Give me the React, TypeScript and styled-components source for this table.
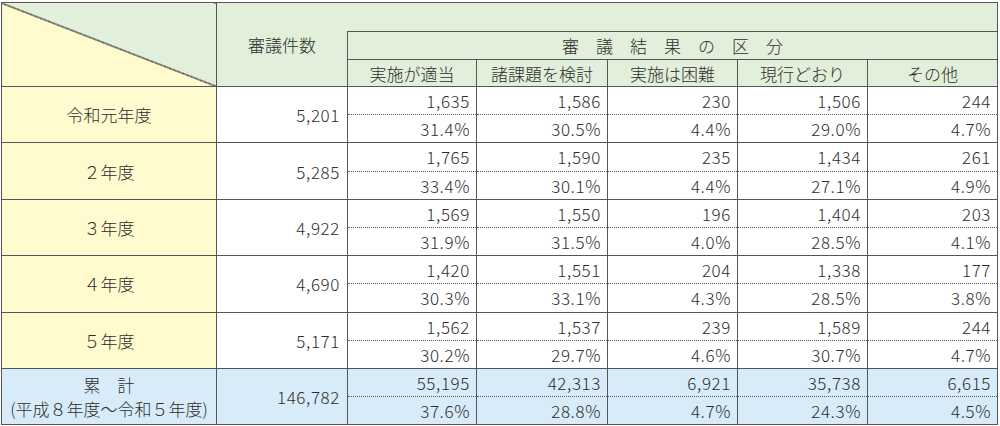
import React from "react";
import styled, { createGlobalStyle } from "styled-components";

const Global = createGlobalStyle`
  html, body { margin: 0; padding: 0; background: #ffffff; }
  body { font-family: "Noto Sans CJK JP", "Noto Sans", sans-serif; color: #333; }
`;

const GREEN = "#e2efda";
const YELLOW = "#fffbcf";
const BLUE = "#d7ecf8";
const LINE = "#555";
const DOT = "#5a5a5a";

const Table = styled.table`
  border-collapse: collapse;
  table-layout: fixed;
  width: 996px;
  margin: 2px 0 0 1px;
  font-size: 17px;
  font-weight: 300;
  line-height: 21px;
  color: #2e2e2e;
  border: 1px solid ${LINE};
`;

const Corner = styled.th`
  border: 1px solid ${LINE};
  padding: 0;
  background: linear-gradient(
    to top right,
    ${YELLOW} calc(50% - 0.7px),
    #3a3a3a calc(50% - 0.5px),
    #3a3a3a calc(50% + 0.5px),
    ${GREEN} calc(50% + 0.7px)
  );
`;

const CountHead = styled.th`
  background: ${GREEN};
  font-weight: 300;
  border: 1px solid ${LINE};
  border-right: none;
  padding: 0;
  text-align: center;
`;

const TopBand = styled.th`
  background: ${GREEN};
  border-top: 1px solid ${LINE};
  border-right: 1px solid ${LINE};
  border-left: none;
  padding: 0;
`;

const GroupHead = styled.th`
  background: ${GREEN};
  font-weight: 300;
  border: 1px solid ${LINE};
  padding: 0;
  text-align: center;
  letter-spacing: 17px;
  text-indent: 17px;
`;

const ColHead = styled.th`
  background: ${GREEN};
  font-weight: 300;
  border: 1px solid ${LINE};
  padding: 0;
  text-align: center;
  white-space: nowrap;
`;

const YearCell = styled.th<{ $total?: boolean }>`
  background: ${(p) => (p.$total ? BLUE : YELLOW)};
  font-weight: 300;
  border: 1px solid ${LINE};
  padding: 0;
  text-align: center;
  white-space: nowrap;
`;

const CountCell = styled.td<{ $total?: boolean }>`
  background: ${(p) => (p.$total ? BLUE : "#fff")};
  border: 1px solid ${LINE};
  padding: 0 7px 0 0;
  text-align: right;
  letter-spacing: 0.6px;
`;

const ValueCell = styled.td<{ $total?: boolean; $upper?: boolean }>`
  background: ${(p) => (p.$total ? BLUE : "#fff")};
  border-left: 1px solid ${LINE};
  border-right: 1px solid ${LINE};
  border-top: ${(p) => (p.$upper ? `1px solid ${LINE}` : `1px dotted ${DOT}`)};
  border-bottom: ${(p) => (p.$upper ? `1px dotted ${DOT}` : `1px solid ${LINE}`)};
  padding: 0 6px 0 0;
  text-align: right;
  letter-spacing: 0.6px;
  white-space: nowrap;
`;

const HeadRow = styled.tr<{ $h: number }>`
  height: ${(p) => p.$h}px;
`;

const DataRow = styled.tr`
  height: 28.2px;
`;

const LabelLine = styled.span`
  display: block;
  line-height: 24px;
`;

type Block = {
  label: React.ReactNode;
  count: string;
  nums: string[];
  pcts: string[];
  total?: boolean;
};

const blocks: Block[] = [
  { label: "令和元年度", count: "5,201", nums: ["1,635", "1,586", "230", "1,506", "244"], pcts: ["31.4%", "30.5%", "4.4%", "29.0%", "4.7%"] },
  { label: "２年度", count: "5,285", nums: ["1,765", "1,590", "235", "1,434", "261"], pcts: ["33.4%", "30.1%", "4.4%", "27.1%", "4.9%"] },
  { label: "３年度", count: "4,922", nums: ["1,569", "1,550", "196", "1,404", "203"], pcts: ["31.9%", "31.5%", "4.0%", "28.5%", "4.1%"] },
  { label: "４年度", count: "4,690", nums: ["1,420", "1,551", "204", "1,338", "177"], pcts: ["30.3%", "33.1%", "4.3%", "28.5%", "3.8%"] },
  { label: "５年度", count: "5,171", nums: ["1,562", "1,537", "239", "1,589", "244"], pcts: ["30.2%", "29.7%", "4.6%", "30.7%", "4.7%"] },
  {
    label: (
      <>
        <LabelLine>累　計</LabelLine>
        <LabelLine>(平成８年度～令和５年度)</LabelLine>
      </>
    ),
    count: "146,782",
    nums: ["55,195", "42,313", "6,921", "35,738", "6,615"],
    pcts: ["37.6%", "28.8%", "4.7%", "24.3%", "4.5%"],
    total: true,
  },
];

const cols = ["実施が適当", "諸課題を検討", "実施は困難", "現行どおり", "その他"];

export default function App() {
  return (
    <>
      <Global />
      <Table>
        <colgroup>
          <col style={{ width: 215 }} />
          <col style={{ width: 131 }} />
          <col style={{ width: 129 }} />
          <col style={{ width: 131 }} />
          <col style={{ width: 130 }} />
          <col style={{ width: 130 }} />
          <col style={{ width: 130 }} />
        </colgroup>
        <thead>
          <HeadRow $h={29}>
            <Corner rowSpan={3} />
            <CountHead rowSpan={3}>審議件数</CountHead>
            <TopBand colSpan={5} />
          </HeadRow>
          <HeadRow $h={28}>
            <GroupHead colSpan={5}>審議結果の区分</GroupHead>
          </HeadRow>
          <HeadRow $h={27}>
            {cols.map((c) => (
              <ColHead key={c}>{c}</ColHead>
            ))}
          </HeadRow>
        </thead>
        <tbody>
          {blocks.map((b, i) => (
            <React.Fragment key={i}>
              <DataRow>
                <YearCell rowSpan={2} $total={b.total}>
                  {b.label}
                </YearCell>
                <CountCell rowSpan={2} $total={b.total}>
                  {b.count}
                </CountCell>
                {b.nums.map((n, j) => (
                  <ValueCell key={j} $upper $total={b.total}>
                    {n}
                  </ValueCell>
                ))}
              </DataRow>
              <DataRow>
                {b.pcts.map((p, j) => (
                  <ValueCell key={j} $total={b.total}>
                    {p}
                  </ValueCell>
                ))}
              </DataRow>
            </React.Fragment>
          ))}
        </tbody>
      </Table>
    </>
  );
}
